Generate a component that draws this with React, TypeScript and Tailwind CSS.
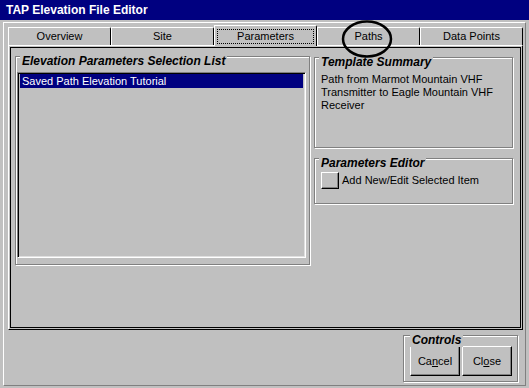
import React from "react";

function Group({
  title,
  className,
  titleClass,
  children,
}: {
  title: string;
  className: string;
  titleClass?: string;
  children?: React.ReactNode;
}) {
  return (
    <div
      className={`relative border border-[#808080] shadow-[inset_1px_1px_0_#ffffff,1px_1px_0_#ffffff] ${className}`}
    >
      <span
        className={`absolute -top-[3px] left-[4px] px-[2px] bg-[#c0c0c0] font-bold italic text-[12px] leading-[14px] whitespace-nowrap ${
          titleClass ?? ""
        }`}
      >
        {title}
      </span>
      {children}
    </div>
  );
}

function Tab({ label, selected }: { label: string; selected?: boolean }) {
  if (selected) {
    return (
      <div className="relative z-10 w-[103px] h-[21px] -mb-[1px] bg-[#c0c0c0] border-l border-t border-white border-r border-r-black rounded-tr-[2px] flex items-start pt-[3px] px-[2px]">
        <div className="w-full h-[15px] border border-dotted border-black flex items-center justify-center">
          {label}
        </div>
      </div>
    );
  }
  return (
    <div className="w-[103px] h-[18px] border-l border-t border-white border-r border-r-black rounded-tr-[2px] flex items-center justify-center">
      {label}
    </div>
  );
}

function Button({ children, className }: { children: React.ReactNode; className: string }) {
  return (
    <div
      className={`border-l border-t border-white border-r border-b border-r-black border-b-black shadow-[inset_-1px_-1px_0_#808080] flex items-center justify-center ${className}`}
    >
      {children}
    </div>
  );
}

export default function App() {
  return (
    <div className="w-[529px] h-[388px] bg-[#c0c0c0] relative overflow-hidden font-['Liberation_Sans',Arial,sans-serif] text-black text-[11px] leading-[13px] select-none">
      {/* Title bar */}
      <div className="h-[20px] bg-[#000080] text-white font-bold text-[12px] pl-[6px] flex items-center">
        TAP Elevation File Editor
      </div>

      {/* Client frame */}
      <div className="ml-[3px] mt-[2px] w-[523px] h-[364px] border-l border-t border-white border-r border-b border-r-[#808080] border-b-[#808080] flex flex-col">
        {/* Tabs */}
        <div className="flex items-end pl-[4px] pt-[2px]">
          <Tab label="Overview" />
          <Tab label="Site" />
          <Tab label="Parameters" selected />
          <Tab label="Paths" />
          <Tab label="Data Points" />
        </div>

        {/* Tab panel */}
        <div className="ml-[4px] w-[515px] h-[285px] border-l border-t border-white border-r border-b border-r-black border-b-black p-[1px]">
          <div className="w-full h-full border border-black flex gap-[4px] pl-[4px] pt-[8px]">
            {/* Left group */}
            <Group title="Elevation Parameters Selection List" className="w-[295px] h-[209px] pl-[1px] pt-[15px]">
              <div className="w-[289px] h-[186px] border-l border-t border-[#808080] border-r border-b border-r-white border-b-white shadow-[inset_1px_1px_0_#000000,inset_-1px_-1px_0_#dfdfdf] p-[2px] pt-[1px]">
                <div className="h-[14px] bg-[#000080] text-white pl-[2px] flex items-center">
                  Saved Path Elevation Tutorial
                </div>
              </div>
            </Group>

            {/* Right column */}
            <div className="flex flex-col gap-[10px] pt-[1px]">
              <Group title="Template Summary" className="w-[199px] h-[91px] pl-[6px] pt-[15px]">
                <div className="leading-[13px]">
                  Path from Marmot Mountain VHF
                  <br />
                  Transmitter to Eagle Mountain VHF
                  <br />
                  Receiver
                </div>
              </Group>
              <Group title="Parameters Editor" className="w-[199px] h-[46px] pl-[6px] pt-[13px]">
                <div className="flex items-center gap-[3px]">
                  <Button className="w-[18px] h-[17px]">{""}</Button>
                  <span>Add New/Edit Selected Item</span>
                </div>
              </Group>
            </div>
          </div>
        </div>

        {/* Bottom controls */}
        <div className="flex justify-end pr-[7px] pt-[5px]">
          <Group title="Controls" className="w-[115px] h-[47px] pl-[6px] pt-[10px]" titleClass="left-[6px]">
            <div className="flex gap-[2px]">
              <Button className="w-[50px] h-[30px]">
                <span>
                  Ca<span className="underline">n</span>cel
                </span>
              </Button>
              <Button className="w-[50px] h-[30px]">
                <span>
                  Cl<span className="underline">o</span>se
                </span>
              </Button>
            </div>
          </Group>
        </div>
      </div>

      {/* Annotation ellipse around Paths */}
      <svg
        className="absolute left-[340px] top-[18px] pointer-events-none"
        width="54"
        height="42"
        viewBox="0 0 54 42"
      >
        <ellipse cx="27" cy="21" rx="24" ry="17.5" fill="none" stroke="#000" strokeWidth="2.5" />
      </svg>
    </div>
  );
}
